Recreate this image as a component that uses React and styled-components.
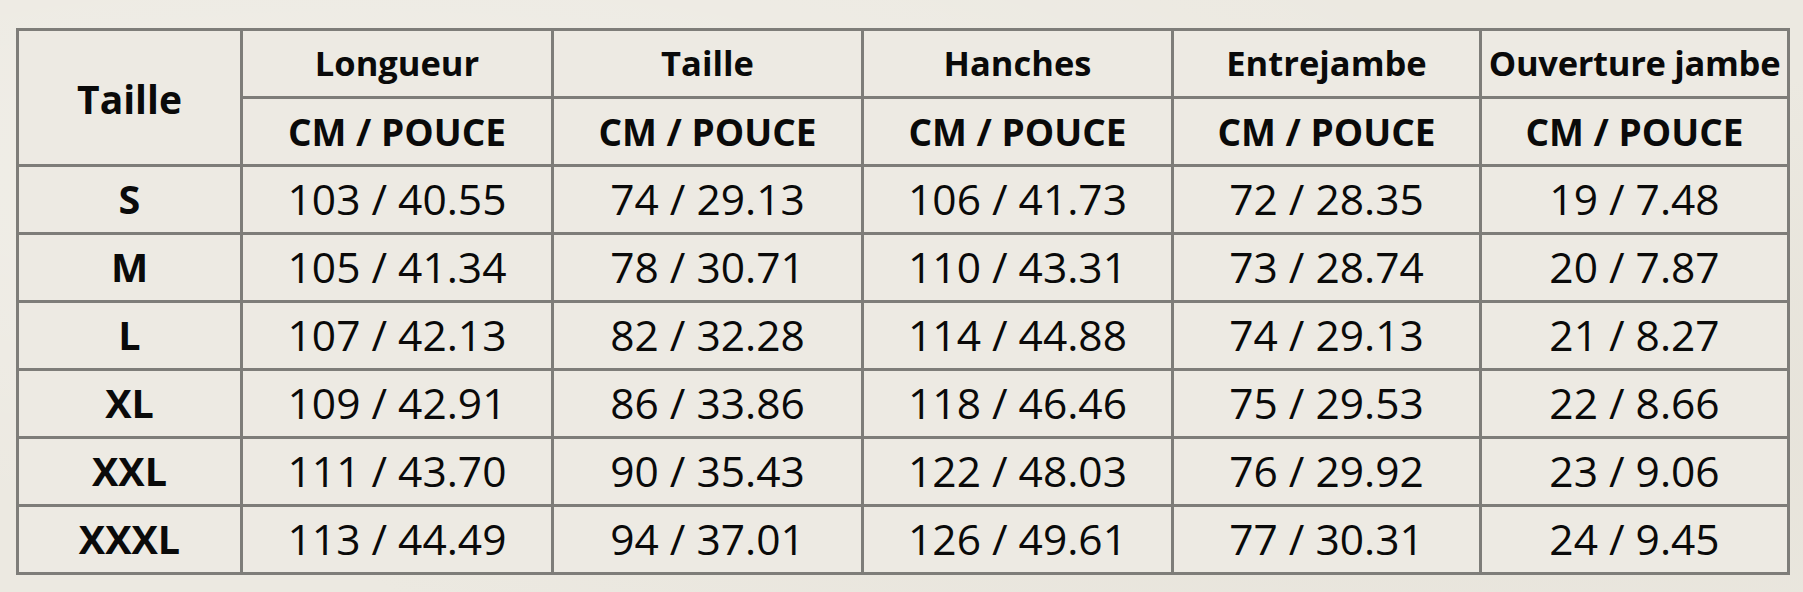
import React from "react";
import styled, { createGlobalStyle } from "styled-components";

const Global = createGlobalStyle`
  html, body {
    margin: 0;
    padding: 0;
    background: #ece9e1;
  }
  body {
    font-family: "Open Sans", "Noto Sans", sans-serif;
    color: #0a0a0a;
  }
`;

const Page = styled.div`
  width: 1803px;
  height: 592px;
  box-sizing: border-box;
  padding: 28px 0 0 16px;
  background:
    radial-gradient(ellipse at 20% 30%, rgba(255,255,255,0.25), transparent 60%),
    radial-gradient(ellipse at 80% 70%, rgba(210,204,192,0.25), transparent 60%),
    #ece9e1;
`;

const Table = styled.div`
  display: grid;
  grid-template-columns: 221px 308px 307px 307px 305px 305px;
  grid-template-rows: repeat(8, 65px);
  gap: 3px;
  padding: 3px;
  width: max-content;
  background: #7e7d79;
`;

const Cell = styled.div`
  display: flex;
  align-items: center;
  justify-content: center;
  background: #edeae3;
  line-height: 1;
  white-space: nowrap;
  overflow: visible;
`;

const CornerCell = styled(Cell)`
  grid-row: span 2;
  font-size: 39px;
  font-weight: 700;
  padding-top: 2px;
`;

const MeasureHead = styled(Cell)`
  font-size: 34.5px;
  font-weight: 700;
  padding-top: ${(p) => (p.$wide ? "0" : "0")};
  letter-spacing: ${(p) => (p.$wide ? "-0.3px" : "0")};
`;

const UnitCell = styled(Cell)`
  font-size: 37px;
  font-weight: 700;
`;

const SizeCell = styled(Cell)`
  font-size: 39.5px;
  font-weight: 700;
`;

const ValueCell = styled(Cell)`
  font-size: 42.5px;
  font-weight: 400;
`;

const measures = ["Longueur", "Taille", "Hanches", "Entrejambe", "Ouverture jambe"];

const rows = [
  ["S", "103 / 40.55", "74 / 29.13", "106 / 41.73", "72 / 28.35", "19 / 7.48"],
  ["M", "105 / 41.34", "78 / 30.71", "110 / 43.31", "73 / 28.74", "20 / 7.87"],
  ["L", "107 / 42.13", "82 / 32.28", "114 / 44.88", "74 / 29.13", "21 / 8.27"],
  ["XL", "109 / 42.91", "86 / 33.86", "118 / 46.46", "75 / 29.53", "22 / 8.66"],
  ["XXL", "111 / 43.70", "90 / 35.43", "122 / 48.03", "76 / 29.92", "23 / 9.06"],
  ["XXXL", "113 / 44.49", "94 / 37.01", "126 / 49.61", "77 / 30.31", "24 / 9.45"],
];

export default function App() {
  return (
    <>
      <Global />
      <Page>
        <Table>
          <CornerCell>Taille</CornerCell>
          {measures.map((m) => (
            <MeasureHead key={m} $wide={m.length > 12}>
              {m}
            </MeasureHead>
          ))}
          {measures.map((m) => (
            <UnitCell key={"u" + m}>CM / POUCE</UnitCell>
          ))}
          {rows.map((r) => (
            <React.Fragment key={r[0]}>
              <SizeCell>{r[0]}</SizeCell>
              {r.slice(1).map((v, i) => (
                <ValueCell key={i}>{v}</ValueCell>
              ))}
            </React.Fragment>
          ))}
        </Table>
      </Page>
    </>
  );
}
